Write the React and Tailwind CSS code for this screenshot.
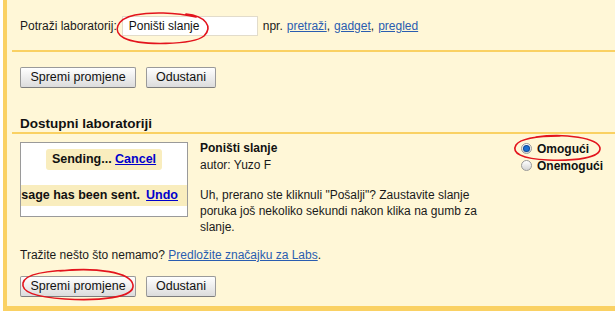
import React from 'react';

function Btn({ children, w }) {
  return (
    <button
      type="button"
      className={`${w} h-[21px] rounded-[2px] border border-[#9a9a9a] border-b-[#7d7d7d] bg-gradient-to-b from-white to-[#dcdcdc] text-[12.5px] leading-none text-[#111] flex items-center justify-center`}
    >
      {children}
    </button>
  );
}

function Radio({ checked, label }) {
  return (
    <div className="flex items-center gap-[5px] h-[17px]">
      <span className="w-[11px] h-[11px] rounded-full border border-[#9a9a9a] bg-gradient-to-b from-white to-[#d4d4d4] flex items-center justify-center">
        {checked && <span className="w-[5px] h-[5px] rounded-full bg-[#1b6fd1] ring-1 ring-[#0b4a98]" />}
      </span>
      <span className="font-bold text-[#111]">{label}</span>
    </div>
  );
}

export default function App() {
  return (
    <div className="relative min-h-screen w-[615px] h-[315px] overflow-hidden bg-white font-['Liberation_Sans',Arial,sans-serif] text-[12px] text-[#1a1a1a]">
      <div className="ml-[3px] h-[311px] bg-[#fff7d7] border-l-4 border-b-[5px] border-[#fad163] pl-[5px]">
        {/* Search */}
        <div className="h-[52px] border-b-2 border-[#fad163] pl-2 pt-[16px]">
          <div className="flex items-center h-[20px] whitespace-nowrap">
            <span>Potraži laboratorij:</span>
            <div className="ml-[5px] w-[136px] h-[20px] bg-white border border-[#e2dccb] pl-[6px] flex items-center text-[#111]">
              Poništi slanje
            </div>
            <span className="ml-[5px]">npr.</span>
            <a className="ml-[4px] text-[#2a5db0] underline">pretraži</a>,
            <a className="ml-[4px] text-[#2a5db0] underline">gadget</a>,
            <a className="ml-[4px] text-[#2a5db0] underline">pregled</a>
          </div>
        </div>

        {/* Save row + heading */}
        <div className="border-b-2 border-[#fad163] pl-2 pt-[15px]">
          <div className="flex gap-[10px]">
            <Btn w="w-[116px]">Spremi promjene</Btn>
            <Btn w="w-[70px]">Odustani</Btn>
          </div>
          <div className="mt-[28px] h-[16px] leading-[16px] text-[13.5px] font-bold text-[#111]">Dostupni laboratoriji</div>
        </div>

        {/* Lab row */}
        <div className="pl-2 pt-[6px]">
          <div className="flex items-start">
            <div className="mt-[2px] w-[168px] h-[75px] bg-white border border-[#9a9a9a] pt-[6px] flex flex-col items-center text-[12.5px]">
              <div className="h-[21px] px-[6px] rounded-[3px] bg-[#f9edbe] flex items-center font-bold text-[#111] whitespace-nowrap">
                Sending...&nbsp;<a className="text-[#0000cc] underline">Cancel</a>
              </div>
              <div className="mt-[15px] w-full h-[21px] bg-[#f9edbe] flex items-center justify-end pr-[9px] whitespace-nowrap font-bold text-[#111]">
                <span>sage has been sent.</span>
                <a className="ml-[6px] text-[#0000cc] underline">Undo</a>
              </div>
            </div>
            <div className="ml-[12px] w-[321px] leading-[16px]">
              <div className="font-bold text-[#111]">Poništi slanje</div>
              <div className="mt-[1px]">autor: Yuzo F</div>
              <p className="mt-[14px] w-[288px]">
                Uh, prerano ste kliknuli "Pošalji"? Zaustavite slanje poruka još nekoliko sekundi nakon klika na gumb za slanje.
              </p>
            </div>
            <div className="flex flex-col">
              <Radio checked label="Omogući" />
              <Radio label="Onemogući" />
            </div>
          </div>

          <div className="mt-[12px] h-[16px] leading-[16px]">
            Tražite nešto što nemamo? <a className="text-[#2a5db0] underline">Predložite značajku za Labs</a>.
          </div>

          <div className="mt-[13px] flex gap-[10px]">
            <Btn w="w-[116px]">Spremi promjene</Btn>
            <Btn w="w-[70px]">Odustani</Btn>
          </div>
        </div>
      </div>

      {/* red hand-drawn annotations */}
      <svg className="absolute inset-0 pointer-events-none" width="615" height="315" viewBox="0 0 615 315" fill="none">
        <path d="M186 14 C206 16 213 27 204 36 C193 45 140 46 124 38 C112 32 116 19 135 15 C150 12 175 12 196 17" stroke="#e3141d" strokeWidth="1.6" strokeLinecap="round" />
        <path d="M536 137 C565 133 598 138 600 148 C601 158 575 161 548 160 C522 159 511 153 516 145 C520 139 532 136 560 136" stroke="#e3141d" strokeWidth="1.6" strokeLinecap="round" />
        <path d="M60 271 C95 267 131 272 133 285 C135 298 98 301 65 299 C35 297 21 292 23 283 C25 274 45 270 82 270" stroke="#e3141d" strokeWidth="1.6" strokeLinecap="round" />
      </svg>
    </div>
  );
}
